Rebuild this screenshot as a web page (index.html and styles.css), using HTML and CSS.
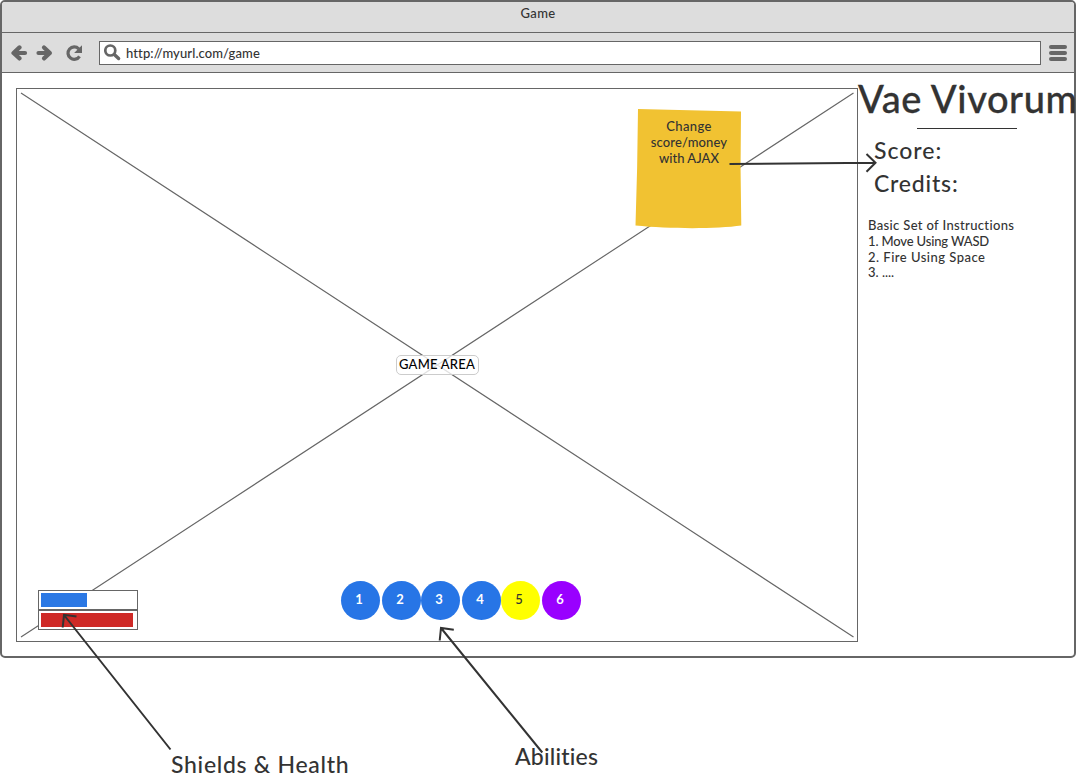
FILE: index.html
```html
<!DOCTYPE html>
<html lang="en">
<head>
<meta charset="utf-8">
<title>Game</title>
<link rel="stylesheet" href="styles.css">
</head>
<body>
<div class="window">
  <header class="titlebar"><span class="t-title">Game</span></header>
  <nav class="toolbar">
    <svg class="nav-icons" width="76" height="24" viewBox="0 0 76 24" fill="none" stroke="#666">
      <path d="M3 12H14M8.500 6.400L2.500 12L8.500 17.400" stroke-width="4.200" stroke-linecap="round" stroke-linejoin="round"/>
      <path d="M27.500 12H38.500M33 6.400L38.900 12L33 17.400" stroke-width="4.200" stroke-linecap="round" stroke-linejoin="round"/>
      <path d="M67.700 7.800A6.200 6.200 0 1 0 68.500 15.300" stroke-width="3.200"/>
      <path d="M71 4.200V12H63.100Z" fill="#666" stroke="none"/>
    </svg>
    <div class="address">
      <svg class="search" width="18" height="18" viewBox="0 0 18 18" fill="none" stroke="#666">
        <circle cx="6.300" cy="7.500" r="5" stroke-width="2.700"/>
        <path d="M10.300 11.500L14.600 15.500" stroke-width="3.400" stroke-linecap="round"/>
      </svg>
      <span class="t-url">http://myurl.com/game</span>
    </div>
    <div class="menu"><i></i><i></i><i></i></div>
  </nav>
  <div class="content">
    <main class="game">
      <svg class="cross" width="840" height="552" viewBox="0 0 840 552" stroke="#666" stroke-width="1.150">
        <path d="M4 4L836.500 548M836.500 4L4 548"/>
      </svg>
      <span class="game-label"><span class="t-area">GAME AREA</span></span>
      <div class="bars">
        <div class="bar"><div class="fill shield"></div></div>
        <div class="bar"><div class="fill health"></div></div>
      </div>
      <div class="abilities">
        <span class="ability">1</span><span class="ability">2</span><span class="ability">3</span><span class="ability">4</span><span class="ability yellow">5</span><span class="ability purple">6</span>
      </div>
    </main>
    <aside class="side">
      <h1><span class="t-h1">Vae Vivorum</span></h1>
      <div class="rule"></div>
      <p class="stat"><span class="t-score">Score:</span></p>
      <p class="stat"><span class="t-credits">Credits:</span></p>
      <div class="instructions">
        <div><span class="t-i0">Basic Set of Instructions</span></div>
        <div><span class="t-i1">1. Move Using WASD</span></div>
        <div><span class="t-i2">2. Fire Using Space</span></div>
        <div class="last"><span class="t-i3">3. ....</span></div>
      </div>
    </aside>
  </div>
</div>

<div class="note">
  <svg class="paper" width="108" height="122" viewBox="0 0 108 122">
    <path d="M3 1L106 3.500Q105 60 106.300 117.500C82 121 35 121 .5 117.500Q2.500 60 3 1Z" fill="#f1c232"/>
  </svg>
  <div class="note-text"><span class="t-n1">Change</span><span class="t-n2">score/money</span><span class="t-n3">with AJAX</span></div>
</div>
<svg class="arrows" width="1079" height="781" viewBox="0 0 1079 781" fill="none" stroke="#333" stroke-width="2">
  <path d="M729.500 164L875 162.700M866.500 154L875.500 162.800L866.500 171.700"/>
  <path d="M170.500 749.500L64 615M76.500 616.600L64 614.800L62.700 627.500"/>
  <path d="M542.300 752.500L441 628M453.800 629.800L441 628L439.700 640.500"/>
</svg>
<span class="caption shields">Shields &amp; Health</span>
<span class="caption abil">Abilities</span>
</body>
</html>
```
FILE: styles.css
```css
* { box-sizing: border-box; }
body {
  margin: 0;
  width: 1079px;
  height: 781px;
  overflow: hidden;
  position: relative;
  background: #fff;
  color: #333;
  font: 500 13px/16px Lato, "Open Sans", sans-serif;
  font-variant-ligatures: none;
}
span { white-space: nowrap; }
.window {
  width: 1076px;
  height: 658px;
  border: 2px solid #666;
  border-radius: 5px;
  background: #fff;
}
.titlebar {
  height: 31px;
  background: #ddd;
  border-bottom: 1px solid #666;
  border-radius: 3px 3px 0 0;
  text-align: center;
  padding-top: 3px;
}
.toolbar {
  height: 40px;
  background: #ddd;
  border-bottom: 1px solid #666;
  display: flex;
  align-items: center;
  padding-left: 9px;
}
.nav-icons { margin-right: 12px; }
.address {
  width: 942px;
  height: 24px;
  border: 1px solid #666;
  background: #fff;
  display: flex;
  align-items: center;
  padding-left: 4px;
}
.search { margin: -2px 4px 0 0; }
.menu {
  margin-left: 8px;
  display: flex;
  flex-direction: column;
  gap: 2px;
}
.menu i {
  width: 18px;
  height: 4px;
  border-radius: 2px;
  background: #666;
}
.content { display: flex; padding: 15px 0 0 14px; }
.game {
  width: 842px;
  height: 554px;
  flex: none;
  border: 1px solid #666;
  position: relative;
}
.cross { display: block; }
.game-label {
  position: absolute;
  left: 379px;
  top: 266px;
  width: 83px;
  height: 20px;
  border: 1px solid #ccc;
  border-radius: 5px;
  background: rgba(255,255,255,.8);
  color: #000;
  padding-left: 2px;
  line-height: 17px;
}
.bars {
  position: absolute;
  left: 21px;
  top: 501px;
  width: 100px;
}
.bar {
  height: 20px;
  border: 1px solid #666;
  background: #fff;
  padding: 2px;
}
.fill { height: 14px; }
.shield { width: 46px; background: #2b78e4; }
.health { width: 92px; background: #cf2a27; }
.abilities {
  position: absolute;
  left: 324px;
  top: 492px;
  display: grid;
  grid-template-columns: 41px 39px 41px 39px 41px 39px;
}
.ability {
  width: 39px;
  height: 39px;
  border-radius: 50%;
  background: #2775e6;
  color: #fff;
  font-weight: 700;
  line-height: 37px;
  text-align: center;
  padding-right: 3px;
}
.ability.yellow { background: #ff0; color: #333; font-weight: 500; }
.ability.purple { background: #90f; }
.side { width: 216px; }
h1 {
  margin: 0;
  height: 40px;
  font-size: 38px;
  line-height: 21px;
  font-weight: 500;
  -webkit-text-stroke: .3px currentColor;
}
.rule { width: 100px; height: 1px; margin-left: 59px; background: #333; }
.stat { margin: 0 0 0 16px; height: 33px; font-size: 23px; line-height: 43px; }
.instructions { margin: 22px 0 0 10px; }
.last { margin-top: -1px; }
.note {
  position: absolute;
  left: 635px;
  top: 108px;
  width: 108px;
  height: 122px;
}
.paper { position: absolute; left: 0; top: 0; }
.note-text {
  position: relative;
  display: flex;
  flex-direction: column;
  align-items: center;
  padding-top: 10px;
}
.arrows { position: absolute; left: 0; top: 0; }
.caption { position: absolute; font-size: 23px; line-height: 28px; }
.shields { left: 171px; top: 750px; letter-spacing: .7px; }
.abil { left: 515px; top: 742px; letter-spacing: .2px; }
.t-title { letter-spacing: .4px; }
.t-url { letter-spacing: .1px; }
.t-area { letter-spacing: .2px; }
.t-h1 { letter-spacing: .6px; }
.t-score { letter-spacing: 1px; }
.t-credits { letter-spacing: .8px; }
.t-i0 { letter-spacing: .35px; }
.t-i1 { letter-spacing: -.15px; }
.t-i2 { letter-spacing: .48px; }
.t-n1 { letter-spacing: .4px; }
.t-n2 { letter-spacing: .12px; }
```
